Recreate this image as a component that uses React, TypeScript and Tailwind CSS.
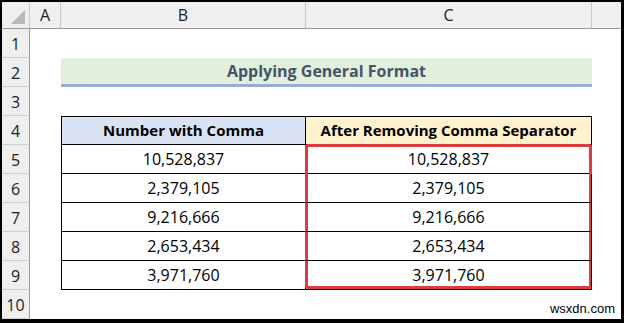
const rows = [
  ["10,528,837", "10,528,837"],
  ["2,379,105", "2,379,105"],
  ["9,216,666", "9,216,666"],
  ["2,653,434", "2,653,434"],
  ["3,971,760", "3,971,760"],
];

const cellFont = { fontFamily: "'Open Sans', 'Liberation Sans', sans-serif" };

function ColHead({ label, last }: { label: string; last?: boolean }) {
  return (
    <div
      className={`flex items-center justify-center border-b border-[#9b9b9b] bg-[#efefef] text-[16px] text-[#222] ${
        last ? "" : "border-r border-r-[#c8c8c8]"
      }`}
    >
      {label}
    </div>
  );
}

function RowHead({ n }: { n: number }) {
  return (
    <div className="flex items-center justify-center border-r border-b border-r-[#9b9b9b] border-b-[#d0d0d0] bg-[#efefef] pt-[2px] text-[16px] text-[#222]">
      {n}
    </div>
  );
}

export default function App() {
  return (
    <div className="h-[323px] w-[624px] overflow-hidden border-t-2 border-l-2 border-r-[3px] border-b-4 border-black bg-white" style={cellFont}>
      <div className="grid h-full grid-cols-[28px_31px_245px_286px_1fr] grid-rows-[27px_repeat(10,29px)]">
        {/* column headers */}
        <div className="relative border-r border-b border-r-[#c8c8c8] border-b-[#9b9b9b] bg-[#efefef]">
          <div className="absolute right-[4px] bottom-[4px] h-0 w-0 border-b-[14px] border-l-[14px] border-b-[#b9b9b9] border-l-transparent" />
        </div>
        <ColHead label="A" />
        <ColHead label="B" />
        <ColHead label="C" />
        <ColHead label="" last />

        {/* row 1 */}
        <RowHead n={1} />
        <div className="col-span-4" />

        {/* row 2: title */}
        <RowHead n={2} />
        <div />
        <div className="col-span-2 flex items-center justify-center border-b-[3px] border-[#97acd6] bg-[#e2efda] text-[16px] font-bold text-[#44546a]">
          Applying General Format
        </div>
        <div />

        {/* row 3 */}
        <RowHead n={3} />
        <div className="col-span-4" />

        {/* row 4: table head */}
        <RowHead n={4} />
        <div />
        <div className="flex items-center justify-center border border-black bg-[#dae3f3] text-[15px] font-bold text-black">
          Number with Comma
        </div>
        <div className="flex items-center justify-center border-y border-r border-black bg-[#fff2cc] text-[15px] font-bold text-black">
          After Removing Comma Separator
        </div>
        <div />

        {rows.map(([b, c], i) => (
          <div key={i} className="contents">
            <RowHead n={5 + i} />
            <div />
            <div className="flex items-center justify-center border-x border-b border-black text-[16px] text-black">
              {b}
            </div>
            <div className="relative flex items-center justify-center border-r border-b border-black text-[16px] text-black">
              {c}
              {i === 0 && (
                <div className="absolute top-[-1px] left-[-1px] right-[-1px] h-[145px] rounded-[3px] border-[3px] border-[#dc3d41]" />
              )}
            </div>
            <div />
          </div>
        ))}

        {/* row 10 */}
        <RowHead n={10} />
        <div className="col-span-4 flex items-end justify-end pr-[6px] pb-[1px]">
          <span className="text-[13px] text-black" style={{ fontFamily: "'Liberation Sans', Arial, sans-serif" }}>
            wsxdn.com
          </span>
        </div>
      </div>
    </div>
  );
}
